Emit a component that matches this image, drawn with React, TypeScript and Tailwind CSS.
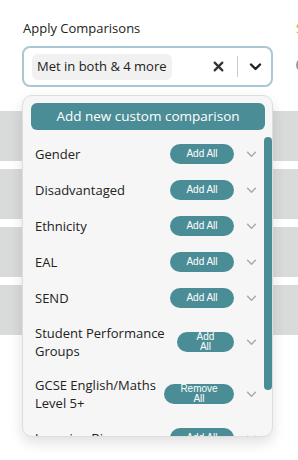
import React from "react";

/* ── Data ─────────────────────────────────────────────────────────────── */

type Row = { label: string; action: string; pillW: string; stacked?: boolean };

const ROWS: Row[] = [
  { label: "Gender", action: "Add All", pillW: "w-16" },
  { label: "Disadvantaged", action: "Add All", pillW: "w-16" },
  { label: "Ethnicity", action: "Add All", pillW: "w-16" },
  { label: "EAL", action: "Add All", pillW: "w-16" },
  { label: "SEND", action: "Add All", pillW: "w-16" },
  { label: "Student Performance Groups", action: "Add All", pillW: "w-[57px]", stacked: true },
  { label: "GCSE English/Maths Level 5+", action: "Remove All", pillW: "w-[70px]", stacked: true },
  { label: "Learning Biases", action: "Add All", pillW: "w-16" },
];

/* ── Small icons ──────────────────────────────────────────────────────── */

function Chevron({ className, width = 1.6 }: { className?: string; width?: number }) {
  return (
    <svg className={className} viewBox="0 0 12 8" fill="none" stroke="currentColor" strokeWidth={width} strokeLinecap="round" strokeLinejoin="round">
      <path d="M1.5 1.5L6 6l4.5-4.5" />
    </svg>
  );
}

/* ── Page ─────────────────────────────────────────────────────────────── */

export default function App() {
  return (
    <div className="relative w-[298px] h-[460px] overflow-hidden bg-white font-['Open_Sans',sans-serif] text-[#222]">
      {/* ── Filter row ───────────────────────────────────── */}
      <div className="flex pt-[18px]">
        <div className="ml-[22px] w-[251px] shrink-0">
          <div className="text-[13px] leading-5 pl-[1px] mb-[8px]">Apply Comparisons</div>
          <div className="h-[41px] rounded-lg border-2 border-[#abc6d5] flex items-center pl-[8px] pr-[9px]">
            <div className="h-[26px] rounded-md bg-[#f1f1f1] flex items-center px-[5px] text-[13px]">
              Met in both &amp; 4 more
            </div>
            <div className="ml-auto flex items-center">
              <svg className="w-[11px] h-[11px] text-[#333] mr-[13px]" viewBox="0 0 10 10" stroke="currentColor" strokeWidth={2} strokeLinecap="round">
                <path d="M1.5 1.5l7 7M8.5 1.5l-7 7" />
              </svg>
              <div className="w-px h-[21px] bg-[#cccccc]" />
              <Chevron className="w-[13px] h-[8px] ml-[11px] text-[#222]" width={2.4} />
            </div>
          </div>
        </div>
        <div className="ml-[23px] shrink-0 w-[200px]">
          <div className="text-[13px] leading-5 text-[#e0a030] mb-[20px]">Subject</div>
          <div className="w-[14px] h-[14px] rounded-full border-2 border-[#999]" />
        </div>
      </div>

      {/* ── Table placeholder rows behind the menu ───────── */}
      <div className="mt-[24px] flex flex-col gap-2">
        {[0, 1, 2, 3].map((i) => (
          <div key={i} className="h-[50px] bg-[#d9dada]" />
        ))}
      </div>

      {/* ── Dropdown menu ────────────────────────────────── */}
      <div className="absolute left-[22px] top-[95px] w-[251px] h-[342px] rounded-[10px] border border-[#dedede] bg-[#f6f6f6] shadow-[0_6px_14px_rgba(0,0,0,0.12)] overflow-hidden">
        <div className="px-[8px] pt-[7px]">
          <button className="w-[234px] h-[27px] rounded-md bg-[#4b8d96] text-white text-[13.5px] leading-none">
            Add new custom comparison
          </button>
        </div>

        <div className="mt-[6px] pl-[12px] pr-[15px]">
          {ROWS.map((row) => (
            <div key={row.label} className="flex items-center py-2">
              <div className="flex-1 pr-2 text-[13px] leading-[18px]">{row.label}</div>
              <div
                className={`${row.pillW} h-5 rounded-full bg-[#4b8d96] text-white font-['Liberation_Sans',Arial,sans-serif] text-[10px] flex flex-col items-center justify-center shrink-0 ${row.stacked ? "leading-[10px]" : "leading-none"}`}
              >
                {row.stacked ? (
                  <>
                    <span>{row.action.split(" ")[0]}</span>
                    <span>{row.action.split(" ")[1]}</span>
                  </>
                ) : (
                  row.action
                )}
              </div>
              <Chevron className="w-[11px] h-[7px] ml-[12px] text-[#a8a8a8] shrink-0" />
            </div>
          ))}
        </div>

        {/* scrollbar thumb */}
        <div className="absolute right-0 top-[41px] w-[8px] h-[253px] rounded-full bg-[#4b8d96]" />
      </div>
    </div>
  );
}
